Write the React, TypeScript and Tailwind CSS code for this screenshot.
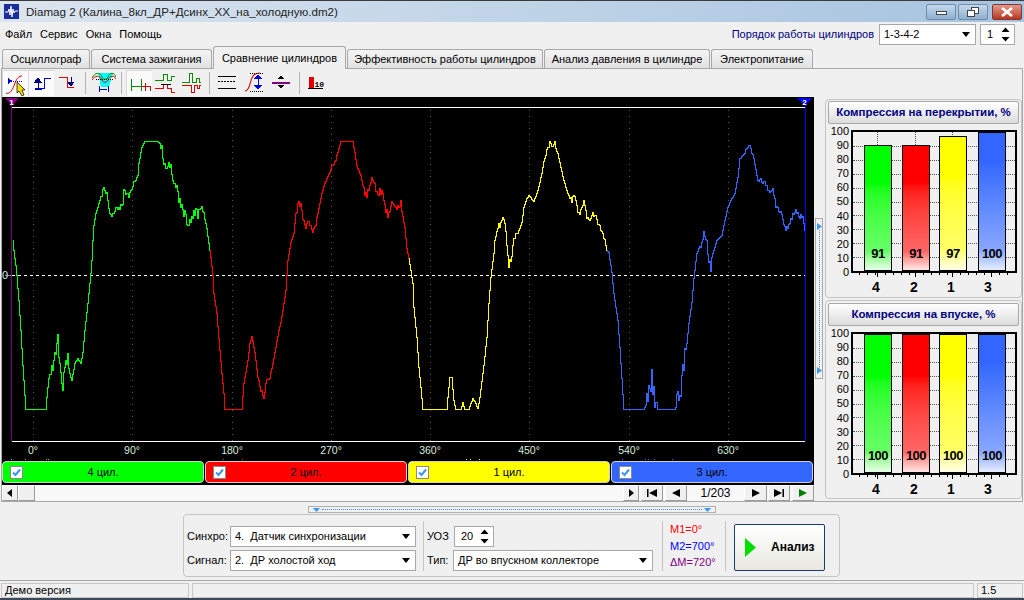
import type { ReactNode } from "react";

type Pt = [number, number];
type Noise = [number, number, number];

const GREEN = "#00ff00";
const RED = "#ff0000";
const YELLOW = "#ffff00";
const BLUE = "#3366ff";

const greenPts: Pt[] = [
  [12, 240], [13, 250], [14, 258], [15, 265], [16, 275], [18, 300], [20, 330], [22, 365], [24, 395], [25, 409], [45, 409],
  [46, 397], [47, 387], [50, 377], [55, 348], [57, 338], [58, 360], [60, 377], [61, 390], [63, 380], [65, 367], [67, 357],
  [68, 370], [71, 380], [74, 363], [77, 358], [80, 363], [82, 352], [84, 330], [87, 303], [90, 273], [91, 260], [92, 240],
  [93, 225], [95, 213], [100, 197], [103, 188], [106, 193], [108, 207], [110, 215], [113, 215], [115, 207], [119, 207],
  [122, 202], [123, 191], [128, 195], [132, 185], [137, 175], [138, 163], [141, 147], [144, 141], [157, 141], [161, 145],
  [162, 162], [165, 168], [168, 162], [171, 172], [173, 180], [176, 188], [178, 197], [182, 207], [183, 213], [188, 225],
  [192, 217], [195, 207], [197, 215], [200, 207], [204, 215], [206, 228], [208, 243], [209, 250],
];
const redPts: Pt[] = [
  [209, 250], [210, 257], [212, 275], [213, 293], [216, 313], [218, 338], [221, 373], [223, 393], [224, 409], [241, 409],
  [243, 383], [247, 360], [249, 343], [251, 336], [254, 352], [257, 377], [259, 387], [261, 393], [263, 395], [265, 383],
  [269, 377], [272, 363], [275, 347], [278, 330], [280, 322], [282, 310], [285, 290], [287, 260], [290, 242], [293, 233],
  [295, 213], [298, 202], [300, 205], [302, 217], [305, 227], [308, 220], [311, 228], [312, 232], [315, 222], [318, 208],
  [321, 193], [324, 183], [328, 173], [331, 165], [334, 162], [337, 152], [340, 141], [352, 141], [354, 152], [356, 165],
  [360, 175], [363, 190], [366, 197], [368, 187], [370, 178], [372, 177], [375, 188], [377, 195], [379, 188], [382, 197],
  [384, 207], [387, 213], [391, 203], [395, 210], [397, 205], [400, 203], [402, 215], [404, 227], [406, 248], [408, 258],
];
const yellowPts: Pt[] = [
  [408, 258], [410, 270], [412, 283], [413, 307], [416, 337], [418, 367], [420, 387], [422, 409], [446, 409], [447, 397],
  [449, 377], [451, 377], [453, 400], [455, 409], [460, 409], [462, 402], [464, 409], [468, 409], [470, 403], [472, 398],
  [475, 403], [477, 408], [479, 397], [483, 365], [486, 337], [488, 303], [490, 277], [493, 253], [494, 240], [497, 227],
  [502, 217], [504, 225], [506, 242], [508, 263], [511, 255], [513, 235], [517, 233], [521, 222], [523, 207], [526, 198],
  [528, 195], [533, 201], [537, 190], [542, 170], [544, 157], [546, 150], [549, 142], [554, 144], [557, 153], [560, 167],
  [563, 180], [567, 193], [570, 200], [574, 195], [578, 215], [583, 203], [587, 218], [591, 215], [595, 212], [598, 225],
  [603, 235], [606, 250],
];
const bluePts: Pt[] = [
  [606, 250], [608, 252], [611, 272], [613, 293], [617, 320], [619, 347], [621, 378], [623, 409], [643, 409], [645, 405],
  [648, 385], [652, 385], [655, 395], [657, 409], [673, 409], [677, 393], [678, 405], [680, 385], [683, 362], [686, 343],
  [688, 323], [691, 302], [693, 278], [696, 253], [700, 243], [703, 233], [705, 235], [707, 252], [710, 267], [713, 250],
  [716, 240], [721, 235], [724, 220], [727, 207], [730, 200], [734, 193], [737, 177], [739, 158], [743, 152], [749, 145],
  [753, 158], [757, 180], [762, 180], [767, 190], [772, 188], [775, 207], [780, 213], [785, 230], [788, 227], [792, 213],
  [795, 208], [798, 218], [802, 216], [804, 230],
];

const greenNoise: Noise[] = [[48, 68, 8], [99, 135, 2], [160, 205, 5]];
const redNoise: Noise[] = [[258, 270, 3], [296, 315, 3], [328, 336, 2], [362, 403, 4]];
const yellowNoise: Noise[] = [[497, 516, 4], [540, 556, 3], [570, 605, 4]];
const blueNoise: Noise[] = [[646, 655, 17], [674, 684, 11], [700, 712, 5], [740, 752, 3], [757, 800, 3]];

// per-pixel stepped trace, jitter where the signal is noisy in the picture
function trace(pts: Pt[], noise: Noise[]) {
  const out: string[] = [];
  let prev = pts[0][1];
  for (let i = 0; i < pts.length - 1; i++) {
    const [x0, y0] = pts[i];
    const [x1, y1] = pts[i + 1];
    for (let x = x0; x < x1; x++) {
      let y = y0 + ((y1 - y0) * (x - x0)) / (x1 - x0);
      const n = noise.find((r) => x >= r[0] && x <= r[1]);
      if (n) {
        const h = Math.sin(x * 12.9898) * 43758.5453;
        y += (h - Math.floor(h) - 0.5) * 2 * n[2];
      }
      y = Math.round(Math.min(409, Math.max(141, y)));
      out.push(`${x + 0.5},${prev + 0.5}`, `${x + 0.5},${y + 0.5}`);
      prev = y;
    }
  }
  const last = pts[pts.length - 1];
  out.push(`${last[0] + 0.5},${prev + 0.5}`, `${last[0] + 0.5},${last[1] + 0.5}`);
  return out.join(" ");
}

const degrees: [number, string][] = [
  [33, "0°"], [132, "90°"], [232, "180°"], [331, "270°"], [430, "360°"], [529, "450°"], [629, "540°"], [728, "630°"],
];

function Scope() {
  return (
    <svg width={812} height={364} viewBox="2 97 812 364" className="block bg-black" shapeRendering="crispEdges">
      {degrees.map(([x]) => (
        <line key={x} x1={x + 0.5} x2={x + 0.5} y1={110} y2={447} stroke="#5a5a5a" strokeDasharray="1 5" />
      ))}
      <line x1={12} x2={805} y1={275.5} y2={275.5} stroke="#fff" strokeDasharray="3 3" />
      <line x1={5} x2={11} y1={275.5} y2={275.5} stroke="#888" />
      <polyline points={trace(greenPts, greenNoise)} fill="none" stroke={GREEN} />
      <polyline points={trace(redPts, redNoise)} fill="none" stroke={RED} />
      <polyline points={trace(yellowPts, yellowNoise)} fill="none" stroke={YELLOW} />
      <polyline points={trace(bluePts, blueNoise)} fill="none" stroke={BLUE} />
      <line x1={12} x2={805} y1={107.5} y2={107.5} stroke="#fff" />
      <line x1={12} x2={805} y1={441.5} y2={441.5} stroke="#fff" />
      <line x1={11.5} x2={11.5} y1={100} y2={441} stroke="#800080" />
      <line x1={805.5} x2={805.5} y1={100} y2={441} stroke="#0000ff" />
      <polygon points="5,98 19,98 12,106" fill="#800080" shapeRendering="auto" />
      <polygon points="797,98 812,98 805,106" fill="#0000ff" shapeRendering="auto" />
      <g shapeRendering="auto" fontFamily="'Liberation Sans', sans-serif">
        <text x={11.5} y={105} fontSize={8} fontWeight={700} fill="#fff" textAnchor="middle">1</text>
        <text x={804.5} y={105} fontSize={8} fontWeight={700} fill="#fff" textAnchor="middle">2</text>
        <text x={2} y={279} fontSize={11} fill="#d8ecf4">0</text>
        {degrees.map(([x, t]) => (
          <text key={t} x={x} y={454} fontSize={10.5} fill="#d8ecd8" textAnchor="middle">{t}</text>
        ))}
      </g>
      {[[11, GREEN], [25, GREEN], [46, GREEN], [48, GREEN], [223, RED], [242, RED], [466, YELLOW], [470, YELLOW], [479, YELLOW], [622, BLUE], [645, BLUE], [648, BLUE], [654, BLUE], [672, BLUE]].map(([x, c]) => (
        <rect key={x as number} x={x as number} y={459} width={1} height={1} fill={c as string} />
      ))}
    </svg>
  );
}

function Tool({ active, children }: { active?: boolean; children: ReactNode }) {
  return (
    <div className={`flex h-[26px] w-[26px] items-center justify-center ${active ? "bg-[#fbfbfb] border-t border-l border-[#d8d8d8]" : ""}`}>
      <svg width={24} height={24} viewBox="0 0 24 24" fill="none" shapeRendering="crispEdges">
        {children}
      </svg>
    </div>
  );
}

function Sep({ cls }: { cls: string }) {
  return <div className={`h-[22px] w-px bg-[#b4b4b4] ${cls}`} />;
}

function Toolbar() {
  return (
    <div className="flex h-[28px] items-center">
      <Tool active>
        <path d="M4 6V12L9 9Z" fill="#0000e0" />
        <path d="M9 9H19" stroke="#0000e0" strokeDasharray="1 1" />
        <path d="M2 21C6 23 9 17 11 11 13 6 15 4 18 4" stroke="#e00000" strokeWidth={1} shapeRendering="auto" />
        <path d="M13 10L21 18H18L20 23 18 24 15 19 13 21Z" fill="#f5d800" stroke="#000" strokeWidth={0.7} shapeRendering="auto" />
      </Tool>
      <Tool active>
        <path d="M5 16H14V6H21" stroke="#0000e0" />
        <path d="M8 9V16M5 10L8 6 11 10Z" stroke="#000080" fill="#000080" />
        <path d="M5 17H12" stroke="#000080" />
      </Tool>
      <Tool>
        <path d="M4 6H12V16H19" stroke="#e00000" />
        <path d="M16 6V12M13 11L16 15 19 11Z" stroke="#000080" fill="#000080" />
      </Tool>
      <Sep cls="mx-[5px]" />
      <Tool>
        <path d="M6 2H21L17 16H9Z" fill="#00ffff" />
        <path d="M0 7C3 1 8 1 10 6 11 9 15 9 16 6 18 1 22 1 24 6" stroke="#009000" strokeWidth={1} shapeRendering="auto" />
        <path d="M0 9C3 4 8 4 10 9 11 12 15 12 16 9 18 4 22 4 24 8" stroke="#e00000" strokeWidth={1} shapeRendering="auto" />
        <path d="M4 8H22" stroke="#000" strokeDasharray="1 1" />
        <path d="M7 15V21M16 15V21M8 18H15" stroke="#0000d0" />
      </Tool>
      <Sep cls="mx-[4px]" />
      <Tool active>
        <path d="M3 7V19M3 14H13M13 7V19" stroke="#009000" />
        <path d="M13 14H17M17 11V19M17 14H22V19" stroke="#e00000" />
      </Tool>
      <Tool>
        <path d="M2 9H10V3H14V9H18V5H22" stroke="#009000" />
        <path d="M2 17H10V13H14V17H18V21H22" stroke="#e00000" />
        <path d="M8 13H18" stroke="#000" />
      </Tool>
      <Tool>
        <path d="M3 11H10V2H13V11H17V7H20V11H22" stroke="#009000" />
        <path d="M3 14H12V21H15V14H18V17H20V14H22" stroke="#e00000" />
      </Tool>
      <Sep cls="ml-[5px] mr-[4px]" />
      <Tool>
        <path d="M3 5H21M3 17H21" stroke="#000" />
        <path d="M3 10H21" stroke="#000" strokeDasharray="2 1" />
      </Tool>
      <Tool>
        <path d="M4 20C9 20 9 10 11 7 12 4 14 2 19 2" stroke="#e00000" strokeWidth={1.1} shapeRendering="auto" />
        <path d="M9 2H23M9 20H23" stroke="#000" strokeDasharray="1 1" />
        <path d="M17 6V16" stroke="#0000e0" />
        <path d="M13 8L17 3 21 8ZM13 14L17 19 21 14Z" fill="#0000e0" />
      </Tool>
      <Tool>
        <path d="M5 11.5H23" stroke="#800080" strokeWidth={2} />
        <path d="M11 8L14 4 17 8ZM11 14L14 18 17 14Z" fill="#000" />
      </Tool>
      <Sep cls="ml-[7px] mr-[4px]" />
      <Tool>
        <rect x={4} y={6} width={5} height={11} fill="#e00000" />
        <path d="M3 17.5H18" stroke="#000" />
        <text x={9.5} y={16} fontSize={8} fontWeight={700} fontFamily="'Liberation Mono', monospace" fill="#000">10</text>
      </Tool>
    </div>
  );
}

const cylinders = [
  { n: "4 цил.", cls: "bg-[#00ff00]" },
  { n: "2 цил.", cls: "bg-[#ff0000]" },
  { n: "1 цил.", cls: "bg-[#ffff00]" },
  { n: "3 цил.", cls: "bg-[#3366ff]" },
];

function CylinderRow() {
  return (
    <div className="flex h-[24px] gap-px bg-black">
      {cylinders.map((c) => (
        <div key={c.n} className={`relative flex h-[22px] w-[202px] items-center justify-center rounded-[4px] border border-[#d0d0d0] text-black ${c.cls}`}>
          <span className="absolute left-[7px] top-[4px] flex h-[13px] w-[13px] items-center justify-center border border-[#8a8a8a] bg-white">
            <svg width={9} height={9} viewBox="0 0 9 9" fill="none">
              <path d="M1 4.5L3.5 7 8 1.5" stroke="#3a96f0" strokeWidth={2} />
            </svg>
          </span>
          {c.n}
        </div>
      ))}
    </div>
  );
}

function NavBtn({ w, children }: { w: string; children: ReactNode }) {
  return (
    <div className={`flex h-[16px] items-center justify-center bg-[#f0f0f0] border-r border-b border-[#9a9a9a] border-t-white border-l-white border-t border-l ${w}`}>
      <svg width={14} height={10} viewBox="0 0 14 10">{children}</svg>
    </div>
  );
}

function NavRow() {
  return (
    <div className="flex h-[16px] bg-[#f8f8f8]">
      <NavBtn w="w-[16px]"><path d="M9 1V9L4 5Z" fill="#000" /></NavBtn>
      <div className="h-[16px] w-[17px] border border-[#9a9a9a] border-t-white border-l-white bg-[#f0f0f0]" />
      <div className="flex-1" />
      <NavBtn w="w-[16px] mr-[2px]"><path d="M5 1V9L10 5Z" fill="#000" /></NavBtn>
      <NavBtn w="w-[22px] mr-[2px]"><path d="M2 1V9H3.5V1ZM12 1V9L4 5Z" fill="#000" /></NavBtn>
      <NavBtn w="w-[22px]"><path d="M11 1V9L3 5Z" fill="#000" /></NavBtn>
      <div className="flex h-[16px] w-[57px] items-center justify-center text-[12px] text-black">1/203</div>
      <NavBtn w="w-[23px] mr-[1px]"><path d="M3 1V9L11 5Z" fill="#000" /></NavBtn>
      <NavBtn w="w-[22px] mr-[2px]"><path d="M2 1V9L10 5ZM10.5 1V9H12V1Z" fill="#000" /></NavBtn>
      <NavBtn w="w-[22px]"><path d="M3 1V9L11 5Z" fill="#008000" /></NavBtn>
    </div>
  );
}

const barStyles: Record<string, string> = {
  "4": "bg-gradient-to-b from-[#00ff00] from-30% via-[#66ff66] via-85% to-[#e6ffe6]",
  "2": "bg-gradient-to-b from-[#ff0000] from-30% via-[#ff6666] via-85% to-[#ffe6e6]",
  "1": "bg-gradient-to-b from-[#ffff00] from-30% via-[#ffff66] via-85% to-[#ffffe6]",
  "3": "bg-gradient-to-b from-[#3366ff] from-20% via-[#88a6ff] via-85% to-[#e6ecff]",
};

const majorTicks = [26, 64, 101, 140];
const minorTicks = [8, 16, 24, 34, 42, 50, 58, 72, 80, 88, 96, 109, 117, 125, 133, 148, 156];

function BarPanel({ title, values, second }: { title: string; values: number[]; second?: boolean }) {
  const order = ["4", "2", "1", "3"];
  const scale = [100, 90, 80, 70, 60, 50, 40, 30, 20, 10, 0];
  return (
    <div className={`h-[199px] rounded-[4px] border border-[#c4c4c4] px-[2px] ${second ? "pt-[2px]" : "pt-[1px]"}`}>
      <div className="flex h-[23px] items-center justify-center rounded-[2px] border border-[#a8a8a8] bg-gradient-to-b from-white to-[#dcdcdc] text-[11.5px] font-bold text-[#000080]">
        {title}
      </div>
      <div className="flex">
        <div className="flex h-[155px] w-[24px] flex-col items-end justify-between pr-[3px] text-[11px] leading-[14px] text-black">
          {scale.map((s) => (
            <span key={s}>{s}</span>
          ))}
        </div>
        <div className="ml-[-1px]">
          <div className="relative mt-[6px] h-[143px] w-[166px] border-2 border-black">
            {scale.slice(1, 10).map((s) => (
              <div key={s} className="absolute left-0 right-0 border-t border-dotted border-[#555]" style={{ top: `${100 - s}%` }} />
            ))}
            {majorTicks.map((x) => (
              <div key={x} className="absolute bottom-0 top-0 border-l border-dotted border-[#555]" style={{ left: x - 2 }} />
            ))}
            <div className="relative flex h-full items-end gap-[10px] pl-[11px]">
              {values.map((v, i) => (
                <div key={order[i]} className={`relative flex w-[28px] items-end justify-center border border-black ${i === 2 ? "ml-[-1px]" : ""} ${i === 3 ? "ml-[1px]" : ""} ${barStyles[order[i]]}`} style={{ height: `${v}%` }}>
                  <span className="absolute bottom-[8px] text-[13px] font-bold leading-[16px] tracking-[-0.5px] text-black">{v}</span>
                </div>
              ))}
            </div>
          </div>
          <svg width={166} height={4} viewBox="0 0 166 4" className="block" shapeRendering="crispEdges">
            {minorTicks.map((x) => (
              <line key={x} x1={x + 0.5} x2={x + 0.5} y1={0} y2={2} stroke="#000" />
            ))}
            {majorTicks.map((x) => (
              <line key={x} x1={x + 0.5} x2={x + 0.5} y1={0} y2={4} stroke="#000" />
            ))}
          </svg>
          <div className="mt-[2px] flex pl-[6px] text-[14px] font-bold leading-[16px] text-black">
            {order.map((o, i) => (
              <span key={o} className={`text-center ${i === 2 ? "w-[36px]" : "w-[38px]"}`}>{o}</span>
            ))}
          </div>
        </div>
      </div>
    </div>
  );
}

function Combo({ text, w }: { text: string; w: string }) {
  return (
    <div className={`flex h-[21px] items-center justify-between border border-[#a8a8a8] bg-white pl-[4px] pr-[5px] text-black ${w}`}>
      <span className="whitespace-pre">{text}</span>
      <svg width={8} height={5} viewBox="0 0 8 5"><path d="M0 0H8L4 5Z" fill="#000" /></svg>
    </div>
  );
}

function Spin({ value, w }: { value: string; w: string }) {
  return (
    <div className={`flex h-[21px] items-center justify-between border border-[#a8a8a8] bg-white pl-[6px] pr-[4px] text-black ${w}`}>
      <span>{value}</span>
      <svg width={9} height={15} viewBox="0 0 9 15">
        <path d="M0.5 5L4.5 0.5 8.5 5ZM0.5 10L4.5 14.5 8.5 10Z" fill="#000" />
      </svg>
    </div>
  );
}

const tabs = [
  { t: "Осциллограф", w: "w-[88px]" },
  { t: "Система зажигания", w: "w-[121px]" },
  { t: "Сравнение цилиндров", w: "w-[133px]", active: true },
  { t: "Эффективность работы цилиндров", w: "w-[196px]" },
  { t: "Анализ давления в цилиндре", w: "w-[166px]" },
  { t: "Электропитание", w: "w-[102px]" },
];

export default function App() {
  return (
    <div className="flex h-[600px] w-[1024px] flex-col overflow-hidden bg-[#f0f0f0] font-['Liberation_Sans',sans-serif] text-[11px] text-black">
      {/* title bar */}
      <div className="flex h-[22px] items-center border-t border-[#3c3c3c] bg-gradient-to-r from-[#dbe5ef] to-[#a6c3e0] pl-[4px]">
        <svg width={15} height={15} viewBox="0 0 15 15" className="shrink-0">
          <rect width={15} height={15} fill="#1a2f9c" />
          <path d="M1 8H4L5 5 6 11 7 2 8 13 9 5 10 9 11 7H14" stroke="#fff" fill="none" />
        </svg>
        <span className="ml-[7px] text-[11.6px] text-[#222]">Diamag 2 (Калина_8кл_ДР+Дсинх_ХХ_на_холодную.dm2)</span>
        <div className="ml-auto flex pr-[2px]">
          <div className="flex h-[16px] w-[30px] items-center justify-center rounded-[2px] border border-[#6f8ca8] bg-gradient-to-b from-[#c4d8ec] to-[#8fb0d0]">
            <div className="mt-[3px] h-[4px] w-[11px] border border-[#444] bg-white" />
          </div>
          <div className="ml-[2px] flex h-[16px] w-[30px] items-center justify-center rounded-[2px] border border-[#6f8ca8] bg-gradient-to-b from-[#c4d8ec] to-[#8fb0d0]">
            <svg width={12} height={10} viewBox="0 0 12 10" fill="#fff" stroke="#444">
              <rect x={4.5} y={0.5} width={7} height={6} />
              <rect x={0.5} y={3.5} width={7} height={6} />
            </svg>
          </div>
          <div className="ml-[4px] flex h-[16px] w-[30px] items-center justify-center rounded-[2px] border border-[#7c3b30] bg-gradient-to-b from-[#e09a8c] to-[#b8321e]">
            <svg width={14} height={10} viewBox="0 0 14 10">
              <path d="M2 1L12 9M12 1L2 9" stroke="#fff" strokeWidth={2.6} />
            </svg>
          </div>
        </div>
      </div>

      {/* menu */}
      <div className="flex h-[24px] items-center pl-[5px]">
        <div className="flex gap-[8px]">
          <span>Файл</span>
          <span>Сервис</span>
          <span>Окна</span>
          <span>Помощь</span>
        </div>
        <span className="ml-auto text-[#000080]">Порядок работы цилиндров</span>
        <Combo text="1-3-4-2" w="ml-[5px] w-[97px]" />
        <Spin value="1" w="ml-[4px] mr-[9px] w-[35px]" />
      </div>

      {/* tabs */}
      <div className="relative z-10 flex h-[22px] items-end gap-px pl-[2px]">
        {tabs.map((t) => (
          <div
            key={t.t}
            className={`flex items-center justify-center whitespace-nowrap rounded-t-[3px] border border-b-0 border-[#a8a8a8] ${t.w} ${
              t.active ? "-mb-px h-[23px] bg-[#f0f0f0]" : "h-[19px] bg-gradient-to-b from-[#f4f4f4] to-[#e2e2e2]"
            }`}
          >
            {t.t}
          </div>
        ))}
      </div>

      {/* page */}
      <div className="mx-[1px] flex h-[434px] flex-col border border-[#a8a8a8]">
        <Toolbar />
        <div className="flex">
          <div className="w-[812px]">
            <Scope />
            <CylinderRow />
            <NavRow />
          </div>
          <div className="mt-[121px] ml-[1px] flex h-[161px] w-[8px] flex-col items-center justify-between border border-[#a8a8a8] py-[4px]">
            <svg width={5} height={7} viewBox="0 0 5 7"><path d="M0 0V7L5 3.5Z" fill="#3a96f0" /></svg>
            <div className="w-0 flex-1 border-l border-dotted border-[#3a96f0]" />
            <svg width={5} height={7} viewBox="0 0 5 7"><path d="M0 0V7L5 3.5Z" fill="#3a96f0" /></svg>
          </div>
          <div className="ml-[2px] flex w-[197px] flex-col gap-[2px] pt-[2px]">
            <BarPanel title="Компрессия на перекрытии, %" values={[91, 91, 97, 100]} />
            <BarPanel title="Компрессия на впуске, %" values={[100, 100, 100, 100]} second />
          </div>
        </div>
      </div>

      {/* splitter */}
      <div className="ml-[308px] mt-[4px] flex h-[7px] w-[408px] items-center justify-between border border-[#b0b0b0] px-[4px]">
        <svg width={7} height={4} viewBox="0 0 7 4"><path d="M0 0H7L3.5 4Z" fill="#3a96f0" /></svg>
        <div className="mx-[2px] h-0 flex-1 border-t border-dotted border-[#3a96f0]" />
        <svg width={7} height={4} viewBox="0 0 7 4"><path d="M0 0H7L3.5 4Z" fill="#3a96f0" /></svg>
      </div>

      {/* analysis group */}
      <div className="ml-[183px] mt-[1px] flex h-[63px] w-[657px] items-center rounded-[4px] border border-[#c4c4c4] pl-[3px] pt-[6px]">
        <div className="flex flex-col gap-[3px]">
          <div className="flex items-center">
            <span className="w-[43px]">Синхро:</span>
            <Combo text="4.  Датчик синхронизации" w="w-[186px]" />
          </div>
          <div className="flex items-center">
            <span className="w-[43px]">Сигнал:</span>
            <Combo text="2.  ДР холостой ход" w="w-[186px]" />
          </div>
        </div>
        <div className="mr-[3px] ml-[7px] mt-[-6px] h-[50px] w-px bg-[#c4c4c4]" />
        <div className="flex flex-col gap-[3px]">
          <div className="flex items-center">
            <span className="w-[27px]">УОЗ</span>
            <Spin value="20" w="w-[40px]" />
          </div>
          <div className="flex items-center">
            <span className="w-[26px]">Тип:</span>
            <Combo text="ДР во впускном коллекторе" w="w-[200px]" />
          </div>
        </div>
        <div className="ml-[9px] mt-[-6px] h-[50px] w-px bg-[#c4c4c4]" />
        <div className="ml-[7px] mt-[-6px] flex w-[55px] flex-col gap-[2.5px] leading-[14px]">
          <span className="text-[#ff0000]">M1=0°</span>
          <span className="text-[#0000ff]">M2=700°</span>
          <span className="text-[#800080]">ΔM=720°</span>
        </div>
        <div className="mt-[-6px] h-[50px] w-px bg-[#c4c4c4]" />
        <div className="ml-[8px] mt-[-3px] flex h-[47px] w-[91px] items-center rounded-[2px] border border-[#1a3c6e] bg-gradient-to-b from-white to-[#e8e8e0] pl-[10px]">
          <svg width={11} height={19} viewBox="0 0 11 19"><path d="M0 0V19L11 9.5Z" fill="#00e000" /></svg>
          <span className="ml-[15px] text-[12px] font-bold">Анализ</span>
        </div>
      </div>

      {/* status bar */}
      <div className="mt-[3px] border-t border-[#a8a8a8] pt-[2px]">
        <div className="flex h-[15px] gap-[3px] pl-[1px]">
          <div className="flex w-[188px] items-center border border-[#c8c8c8] pl-[3px]">Демо версия</div>
          <div className="w-[782px] border border-[#c8c8c8]" />
          <div className="flex w-[46px] items-center border border-[#c8c8c8] pl-[3px]">1.5</div>
        </div>
      </div>
      <div className="mt-auto h-[2px] bg-[#3c4a58]" />
    </div>
  );
}
